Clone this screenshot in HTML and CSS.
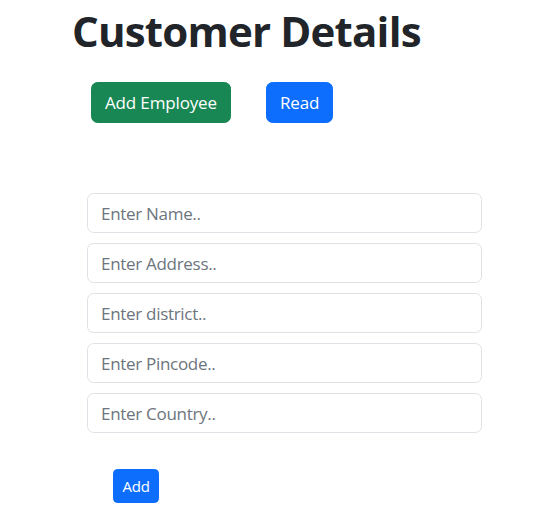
FILE: index.html
```html
<!DOCTYPE html>
<html lang="en">
<head>
<meta charset="utf-8">
<title>Customer Details</title>
<link rel="stylesheet" href="styles.css">
</head>
<body>
<main class="page">
  <h1 class="title">Customer Details</h1>
  <div class="actions">
    <button class="btn btn-success" type="button">Add Employee</button>
    <button class="btn btn-primary" type="button">Read</button>
  </div>
  <form class="form">
    <input class="field" type="text" placeholder="Enter Name..">
    <input class="field" type="text" placeholder="Enter Address..">
    <input class="field" type="text" placeholder="Enter district..">
    <input class="field" type="text" placeholder="Enter Pincode..">
    <input class="field" type="text" placeholder="Enter Country..">
    <div class="submit-row">
      <button class="btn btn-primary btn-sm" type="button">Add</button>
    </div>
  </form>
</main>
</body>
</html>
```
FILE: styles.css
```css
html, body {
  margin: 0;
  background: #ffffff;
}
body {
  font-family: "Open Sans", "Noto Sans", sans-serif;
  color: #212529;
  font-size: 17px;
}
.page {
  display: flex;
  flex-direction: column;
  padding-top: 6px;
}
.title {
  margin: 0 0 0 72px;
  font-size: 42px;
  font-weight: 700;
  line-height: 1.2;
  letter-spacing: -0.8px;
  color: #212529;
}
.actions {
  display: flex;
  gap: 35px;
  margin-top: 26px;
  padding-left: 91px;
}
.btn {
  font-family: inherit;
  font-size: 17px;
  letter-spacing: -0.15px;
  line-height: 26px;
  padding: 6.5px 13px;
  border: 1px solid transparent;
  border-radius: 6.6px;
  color: #ffffff;
  cursor: pointer;
}
.btn-success {
  background: #198754;
  border-color: #198754;
}
.btn-primary {
  background: #0d6efd;
  border-color: #0d6efd;
}
.btn-sm {
  font-size: 15px;
  line-height: 23px;
  padding: 4.5px 8.5px;
  border-radius: 4.4px;
  letter-spacing: -0.2px;
}
.form {
  display: flex;
  flex-direction: column;
  gap: 10px;
  width: 395px;
  margin-top: 70px;
  margin-left: 87px;
}
.field {
  box-sizing: border-box;
  height: 40px;
  width: 100%;
  padding: 0 13px;
  font-family: inherit;
  font-size: 17px;
  letter-spacing: -0.3px;
  color: #212529;
  border: 1px solid #dee2e6;
  border-radius: 6.6px;
  background: #ffffff;
  outline: none;
}
.field::placeholder {
  color: #6c757d;
  opacity: 1;
}
.submit-row {
  display: flex;
  padding-left: 26px;
  margin-top: 26px;
}
```
